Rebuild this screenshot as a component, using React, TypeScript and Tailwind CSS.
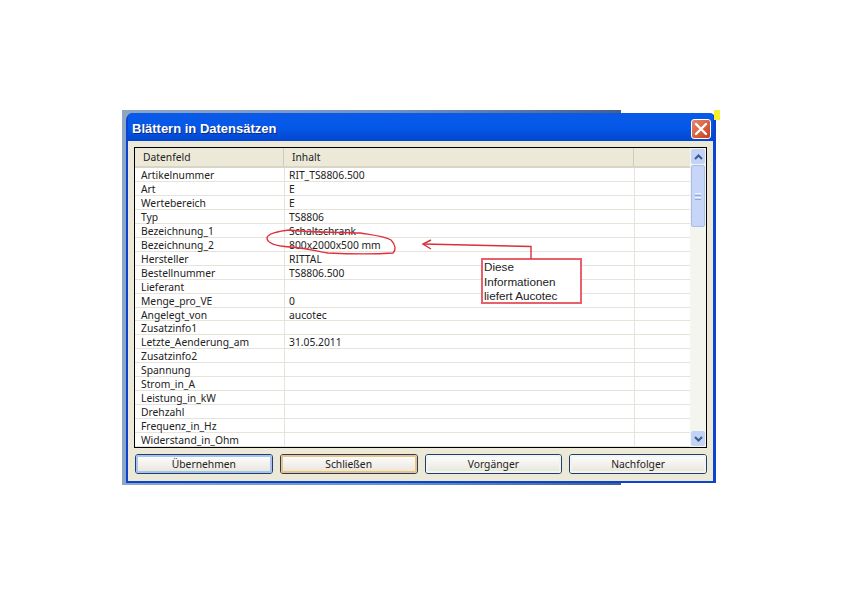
const rows = [
  ['Artikelnummer', 'RIT_TS8806.500'],
  ['Art', 'E'],
  ['Wertebereich', 'E'],
  ['Typ', 'TS8806'],
  ['Bezeichnung_1', 'Schaltschrank'],
  ['Bezeichnung_2', '800x2000x500 mm'],
  ['Hersteller', 'RITTAL'],
  ['Bestellnummer', 'TS8806.500'],
  ['Lieferant', ''],
  ['Menge_pro_VE', '0'],
  ['Angelegt_von', 'aucotec'],
  ['Zusatzinfo1', ''],
  ['Letzte_Aenderung_am', '31.05.2011'],
  ['Zusatzinfo2', ''],
  ['Spannung', ''],
  ['Strom_in_A', ''],
  ['Leistung_in_kW', ''],
  ['Drehzahl', ''],
  ['Frequenz_in_Hz', ''],
  ['Widerstand_in_Ohm', ''],
];

const buttons = [
  { label: 'Übernehmen', ring: 'border-[#a8c4ec]' },
  { label: 'Schließen', ring: 'border-[#f2c27a]' },
  { label: 'Vorgänger', ring: 'border-[#f4f3ee]' },
  { label: 'Nachfolger', ring: 'border-[#f4f3ee]' },
];

const XpButton = ({ label, ring }: { label: string; ring: string }) => (
  <div className="h-[20px] flex-1 rounded-[3px] border border-[#1c3f6e] bg-gradient-to-b from-white to-[#e6e4da]">
    <div className={`flex h-full items-center justify-center rounded-[2px] border-2 pt-px ${ring} text-[10.3px] text-[#222]`}>
      {label}
    </div>
  </div>
);

export default function App() {
  return (
    <div className="relative h-[595px] w-[842px] overflow-hidden bg-white pl-[122px] pt-[110px] font-['Noto_Sans',sans-serif]">
      {/* desktop behind the dialog */}
      <div className="h-[375px] w-[594px] bg-[linear-gradient(90deg,#8fa6c4_0%,#6f92c4_45%,#46608c_84%,#ffffff_84%)] pl-[4px] pt-[3px]">
        {/* window */}
        <div className="flex h-[370px] w-[590px] flex-col overflow-hidden rounded-t-[7px] bg-[#0a45d0] pb-[2px] pl-[2px] pr-[3px]">
          <div className="flex h-[28px] shrink-0 items-center justify-between bg-gradient-to-b from-[#0a5ae8] via-[#0558e8] to-[#0346d0] pl-[4px] pr-[2px] pt-[4px]">
            <span className="font-['Liberation_Sans',sans-serif] text-[13px] font-bold text-white [text-shadow:1px_1px_0_#0a2a80]">Blättern in Datensätzen</span>
            <div className="flex h-[20px] w-[20px] items-center justify-center rounded-[3px] border border-white bg-gradient-to-br from-[#e8876a] to-[#c63c14]">
              <svg width="14" height="14" viewBox="0 0 14 14">
                <path d="M2 2 L12 12 M12 2 L2 12" stroke="white" strokeWidth="2.4" strokeLinecap="round" />
              </svg>
            </div>
          </div>

          <div className="flex flex-1 flex-col bg-[#ece9d8] px-[6px] pt-[6px]">
            {/* table */}
            <div className="flex h-[301px] border border-black bg-white">
              <div className="flex min-w-0 flex-1 flex-col">
                <div className="flex h-[20px] shrink-0 border-b-2 border-[#d8d5c6] bg-[#ece9d9] text-[10.3px] text-[#222]">
                  <div className="flex w-[149px] items-center border-r border-[#cfccbc] pl-[8px] pt-[2px]">Datenfeld</div>
                  <div className="flex w-[350px] items-center border-r border-[#cfccbc] pl-[8px] pt-[2px]">Inhalt</div>
                </div>
                {rows.map(([name, value]) => (
                  <div key={name} className="flex flex-1 border-b border-[#e6e4da] text-[10.3px] leading-[10px] text-[#222]">
                    <div className="w-[150px] border-r border-[#e6e4da] pl-[6px] pt-[2px]">{name}</div>
                    <div className="w-[350px] border-r border-[#e6e4da] pl-[4px] pt-[2px]">{value}</div>
                  </div>
                ))}
              </div>

              {/* scrollbar */}
              <div className="flex w-[16px] shrink-0 flex-col bg-[#f5f5f0] p-px">
                <div className="flex h-[15px] items-center justify-center rounded-[2px] bg-[#c3d3f6]">
                  <svg width="9" height="6" viewBox="0 0 9 6"><path d="M1 5 L4.5 1.5 L8 5" fill="none" stroke="#3b5a94" strokeWidth="2" /></svg>
                </div>
                <div className="mt-px flex h-[62px] flex-col items-center justify-center gap-px rounded-[2px] border border-[#a8bde8] bg-[#c6d5f8]">
                  <div className="h-px w-[6px] bg-[#eef2fd]" />
                  <div className="h-px w-[6px] bg-[#8fa8dc]" />
                  <div className="h-px w-[6px] bg-[#eef2fd]" />
                  <div className="h-px w-[6px] bg-[#8fa8dc]" />
                </div>
                <div className="flex-1" />
                <div className="flex h-[15px] items-center justify-center rounded-[2px] bg-[#c3d3f6]">
                  <svg width="9" height="6" viewBox="0 0 9 6"><path d="M1 1 L4.5 4.5 L8 1" fill="none" stroke="#3b5a94" strokeWidth="2" /></svg>
                </div>
              </div>
            </div>

            <div className="mt-[6px] flex gap-[7px] pl-px">
              {buttons.map((b) => (
                <XpButton key={b.label} label={b.label} ring={b.ring} />
              ))}
            </div>
          </div>
        </div>
      </div>

      {/* yellow scrap of the desktop behind the top right corner */}
      <div className="absolute left-[714px] top-[110px] h-[10px] w-[6px] bg-[#f6f02c]" />

      {/* annotation: callout box */}
      <div className="absolute left-[481px] top-[258px] h-[46px] w-[101px] border-2 border-[#e8606a] bg-white pl-[1px] font-['Liberation_Sans',sans-serif] text-[11.7px] leading-[14.5px] text-[#222]">
        Diese
        <br />
        Informationen
        <br />
        liefert Aucotec
      </div>

      {/* annotation: arrow and freehand ring */}
      <svg className="absolute left-0 top-0" width="842" height="595" viewBox="0 0 842 595">
        <path d="M423 244 L531 246.5 L531 259" fill="none" stroke="#d9303c" strokeWidth="1.4" />
        <path d="M431 240 L423 244 L431 249" fill="none" stroke="#d9303c" strokeWidth="1.4" />
        <path
          d="M290 230 C278 231 267 234 267 238 C267 243 276 246 290 247 C305 248 315 251 328 253 C350 254 378 254 393 253 C396 250 396 245 391 240 C384 236 372 235 360 233 C340 232 315 233 290 230"
          fill="none"
          stroke="#e0303c"
          strokeWidth="1.4"
        />
      </svg>
    </div>
  );
}
